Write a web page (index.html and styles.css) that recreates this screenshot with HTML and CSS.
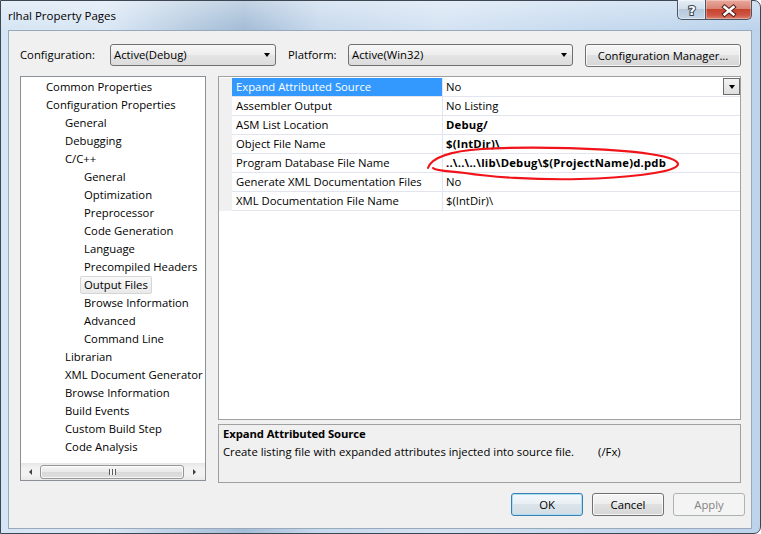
FILE: index.html
```html
<!DOCTYPE html>
<html lang="en">
<head>
<meta charset="utf-8">
<title>rlhal Property Pages</title>
<link rel="stylesheet" href="styles.css">
</head>
<body>
<div class="window">
  <div class="titlebar">
    <div class="title">rlhal Property Pages</div>
    <div class="caption">
      <div class="cap-btn help">
        <svg width="27" height="19" viewBox="0 0 27 19"><text x="14" y="15" text-anchor="middle" class="q">?</text></svg>
      </div>
      <div class="cap-btn close">
        <svg width="46" height="19" viewBox="0 0 46 19"><path class="x-out" d="M19 7 L28 14.5 M28 7 L19 14.5"/><path class="x-in" d="M19 7 L28 14.5 M28 7 L19 14.5"/></svg>
      </div>
    </div>
  </div>
  <div class="client">
    <div class="config-row">
      <div class="lbl lbl-cfg">Configuration:</div>
      <div class="combo combo-cfg"><span class="combo-text">Active(Debug)</span><i class="tri-down"></i></div>
      <div class="lbl lbl-plat">Platform:</div>
      <div class="combo combo-plat"><span class="combo-text">Active(Win32)</span><i class="tri-down"></i></div>
      <button class="btn btn-mgr">Configuration Manager...</button>
    </div>
    <div class="main">
      <div class="tree">
        <ul class="tree-list">
          <li class="l0"><span>Common Properties</span></li>
          <li class="l0"><span>Configuration Properties</span></li>
          <li class="l1"><span>General</span></li>
          <li class="l1"><span>Debugging</span></li>
          <li class="l1"><span>C/C++</span></li>
          <li class="l2"><span>General</span></li>
          <li class="l2"><span>Optimization</span></li>
          <li class="l2"><span>Preprocessor</span></li>
          <li class="l2"><span>Code Generation</span></li>
          <li class="l2"><span>Language</span></li>
          <li class="l2"><span>Precompiled Headers</span></li>
          <li class="l2 sel"><span>Output Files</span></li>
          <li class="l2"><span>Browse Information</span></li>
          <li class="l2"><span>Advanced</span></li>
          <li class="l2"><span>Command Line</span></li>
          <li class="l1"><span>Librarian</span></li>
          <li class="l1"><span>XML Document Generator</span></li>
          <li class="l1"><span>Browse Information</span></li>
          <li class="l1"><span>Build Events</span></li>
          <li class="l1"><span>Custom Build Step</span></li>
          <li class="l1"><span>Code Analysis</span></li>
        </ul>
        <div class="hscroll">
          <div class="sb-arrow sb-left"><i class="tri-left"></i></div>
          <div class="sb-thumb"><i class="grip"></i></div>
          <div class="sb-arrow sb-right"><i class="tri-right"></i></div>
        </div>
      </div>
      <div class="right">
        <div class="grid">
          <div class="row sel"><div class="gut"></div><div class="name">Expand Attributed Source</div><div class="val"><span>No</span><span class="dd"><i class="tri-down"></i></span></div></div>
          <div class="row"><div class="gut"></div><div class="name">Assembler Output</div><div class="val">No Listing</div></div>
          <div class="row"><div class="gut"></div><div class="name">ASM List Location</div><div class="val bold">Debug/</div></div>
          <div class="row"><div class="gut"></div><div class="name">Object File Name</div><div class="val bold">$(IntDir)\</div></div>
          <div class="row"><div class="gut"></div><div class="name">Program Database File Name</div><div class="val bold">..\..\..\lib\Debug\$(ProjectName)d.pdb</div></div>
          <div class="row"><div class="gut"></div><div class="name">Generate XML Documentation Files</div><div class="val">No</div></div>
          <div class="row"><div class="gut"></div><div class="name">XML Documentation File Name</div><div class="val">$(IntDir)\</div></div>
        </div>
        <div class="desc">
          <div class="desc-title">Expand Attributed Source</div>
          <div class="desc-text">Create listing file with expanded attributes injected into source file.<span class="sw">(/Fx)</span></div>
        </div>
      </div>
    </div>
    <div class="buttons">
      <button class="btn btn-ok">OK</button>
      <button class="btn">Cancel</button>
      <button class="btn btn-dis">Apply</button>
    </div>
  </div>
</div>
<svg class="annot" width="761" height="534" viewBox="0 0 761 534">
  <path d="M428 168 C431 158, 450 151, 482 149 C530 146, 610 148, 650 154 C672 157, 681 162, 677 166 C670 173, 625 178, 580 179 C535 180, 490 177, 465 173 C448 171, 436 171, 433 168" />
</svg>
</body>
</html>
```

FILE: styles.css
```css
* { box-sizing: border-box; }
html, body { margin: 0; padding: 0; }
body {
  width: 761px;
  height: 534px;
  overflow: hidden;
  background: #ffffff;
  font-family: "Open Sans", "Noto Sans", "DejaVu Sans", sans-serif;
  font-size: 11.3px;
  color: #000;
}

.window {
  width: 761px;
  height: 534px;
  display: flex;
  flex-direction: column;
  border: 1px solid #3d4754;
  border-radius: 0 7px 7px 0;
  background:
    linear-gradient(180deg, rgba(255,255,255,.35) 0, rgba(255,255,255,0) 29px),
    linear-gradient(90deg, #d6e5f4 0%, #dae7f5 14%, #b3c9df 26%, #a3bcd6 32%, #c7d9ed 42%, #d4e3f3 58%, #c6daef 78%, #bcd3ec 100%);
}

.titlebar {
  height: 29px;
  flex: none;
  display: flex;
  align-items: flex-start;
  padding-left: 7px;
}
.title {
  margin-top: 6px;
  line-height: 18px;
  font-size: 11.5px;
}
.caption {
  margin-left: auto;
  margin-right: 8px;
  margin-top: -1px;
  display: flex;
}
.cap-btn {
  height: 20px;
  border: 1px solid #4b5562;
  border-top: none;
  display: flex;
}
.help {
  width: 28px;
  border-radius: 0 0 0 5px;
  border-right: none;
  background: linear-gradient(#e6eef6 0%, #d3dfeb 45%, #b6c8db 50%, #c5d6e8 100%);
  box-shadow: inset 0 0 0 1px rgba(255,255,255,.45);
}
.close {
  width: 47px;
  border-radius: 0 0 5px 0;
  background: linear-gradient(#eaa99c 0%, #d98576 45%, #c7432e 50%, #cf5544 80%, #de8370 100%);
  box-shadow: inset 0 0 0 1px rgba(255,255,255,.3);
}
.q {
  font-family: "DejaVu Sans", sans-serif;
  font-weight: 700;
  font-size: 13px;
  fill: #ffffff;
  stroke: #37414d;
  stroke-width: 2;
  paint-order: stroke;
}
.x-out { stroke: #4a1f18; stroke-width: 4.6; stroke-linecap: square; fill: none; }
.x-in { stroke: #ffffff; stroke-width: 2.6; stroke-linecap: square; fill: none; }

.client {
  flex: none;
  margin: 0 8px 0 7px;
  width: 744px;
  height: 499px;
  background: #f0f0f0;
  border: 1px solid #98a9bb;
  padding: 13px 10px 0 11px;
  display: flex;
  flex-direction: column;
}

.config-row {
  display: flex;
  align-items: flex-start;
  height: 23px;
  flex: none;
}
.lbl { line-height: 22px; white-space: nowrap; }
.lbl-cfg { width: 90px; }
.lbl-plat { width: 60px; margin-left: 12px; }
.combo {
  height: 22px;
  border: 1px solid #707070;
  border-radius: 3px;
  background: linear-gradient(#f7f7f7 0%, #eeeeee 48%, #e4e4e4 52%, #dcdcdc 100%);
  display: flex;
  align-items: center;
  padding: 0 5px 0 3px;
}
.combo-cfg { width: 166px; }
.combo-plat { width: 225px; }
.combo-text { flex: 1; line-height: 20px; white-space: nowrap; }
.tri-down {
  display: block;
  width: 0;
  height: 0;
  border-left: 3.5px solid transparent;
  border-right: 3.5px solid transparent;
  border-top: 4px solid #000;
}

.btn {
  height: 23px;
  border: 1px solid #707070;
  border-radius: 3px;
  background: linear-gradient(#f6f6f6 0%, #ededed 49%, #e1e1e1 50%, #d6d6d6 100%);
  box-shadow: inset 0 0 0 1px rgba(255,255,255,.75);
  font-family: inherit;
  font-size: 11.3px;
  color: #000;
  padding: 0;
  margin: 0;
  width: 72px;
}
.btn-mgr { width: 156px; margin-left: 12px; }
.btn-ok {
  border-color: #3c7fb1;
  box-shadow: inset 0 0 0 1px #a9def6;
  background: linear-gradient(#f3f8fb 0%, #e8eff4 49%, #dbe4ea 50%, #d2dde4 100%);
}
.btn-dis {
  border-color: #adb2b5;
  background: #f4f4f4;
  box-shadow: none;
  color: #838383;
}

.main {
  flex: none;
  margin-top: 9px;
  height: 407px;
  display: flex;
  align-items: flex-start;
}

.tree {
  width: 186px;
  height: 405px;
  margin-right: 12px;
  border: 1px solid #8b9097;
  background: #ffffff;
  display: flex;
  flex-direction: column;
  overflow: hidden;
}
.tree-list {
  flex: 1;
  margin: 0;
  padding: 1px 0 0;
  list-style: none;
  overflow: hidden;
}
.tree-list li {
  height: 18px;
  white-space: nowrap;
}
.tree-list li span {
  display: inline-block;
  height: 18px;
  line-height: 16px;
  padding: 0 3px;
  border: 1px solid transparent;
  border-radius: 2px;
}
.tree-list li.l0 { padding-left: 21px; }
.tree-list li.l1 { padding-left: 40px; }
.tree-list li.l2 { padding-left: 59px; }
.tree-list li.sel span {
  border-color: #d6d6d6;
  background: linear-gradient(#fafafa, #e9e9e9);
}

.hscroll {
  flex: none;
  height: 17px;
  display: flex;
  align-items: center;
  background: linear-gradient(#e6e6e6, #f2f2f2 30%, #f2f2f2 70%, #e9e9e9);
}
.sb-arrow {
  height: 17px;
  display: flex;
  align-items: center;
  justify-content: center;
}
.sb-left { width: 19px; }
.sb-right { width: 21px; }
.tri-left {
  display: block;
  width: 0; height: 0;
  border-top: 3px solid transparent;
  border-bottom: 3px solid transparent;
  border-right: 3px solid #404040;
}
.tri-right {
  display: block;
  width: 0; height: 0;
  border-top: 3px solid transparent;
  border-bottom: 3px solid transparent;
  border-left: 3px solid #404040;
}
.sb-thumb {
  flex: 1;
  height: 14px;
  border: 1px solid #979797;
  border-radius: 3px;
  background: linear-gradient(#f6f6f6 0%, #e9e9e9 49%, #d9d9d9 51%, #dfdfdf 100%);
  box-shadow: inset 0 0 0 1px rgba(255,255,255,.7);
  display: flex;
  align-items: center;
  justify-content: center;
}
.grip {
  display: block;
  width: 7px;
  height: 6px;
  background: repeating-linear-gradient(90deg, #5a5a5a 0 1px, #f4f4f4 1px 3px);
}

.right {
  width: 523px;
  height: 407px;
  display: flex;
  flex-direction: column;
}
.grid {
  height: 344px;
  flex: none;
  border: 1px solid #a0a0a0;
  background: #ffffff;
  padding-top: 1px;
}
.row {
  display: flex;
  height: 19px;
}
.gut {
  width: 13px;
  flex: none;
  background: #f0f0f0;
}
.name {
  width: 211px;
  flex: none;
  padding-left: 4px;
  line-height: 18px;
  border-right: 1px solid #e2e5ef;
  border-bottom: 1px solid #e2e5ef;
  white-space: nowrap;
  overflow: hidden;
}
.row.sel .name {
  background: #3399ff;
  color: #ffffff;
}
.val {
  flex: 1;
  padding-left: 3px;
  line-height: 18px;
  border-bottom: 1px solid #e2e5ef;
  white-space: nowrap;
  display: flex;
  align-items: flex-start;
}
.val.bold { font-weight: 700; letter-spacing: 0.2px; }
.dd {
  margin-left: auto;
  width: 17px;
  height: 17px;
  border: 1px solid #6c6c6c;
  background: linear-gradient(#f4f4f4, #dedede);
  display: flex;
  align-items: center;
  justify-content: center;
}

.desc {
  margin-top: 4px;
  height: 59px;
  flex: none;
  border: 1px solid #a0a0a0;
  background: #f0f0f0;
  padding: 0 4px;
  line-height: 18px;
}
.desc-title { font-weight: 700; letter-spacing: -0.1px; }
.sw { margin-left: 24px; }

.buttons {
  flex: none;
  margin-top: 10px;
  margin-right: -4px;
  display: flex;
  justify-content: flex-end;
  gap: 9px;
}

.annot {
  position: absolute;
  left: 0;
  top: 0;
  pointer-events: none;
}
.annot path {
  fill: none;
  stroke: #f0141a;
  stroke-width: 2.1;
  stroke-linecap: round;
}
```
